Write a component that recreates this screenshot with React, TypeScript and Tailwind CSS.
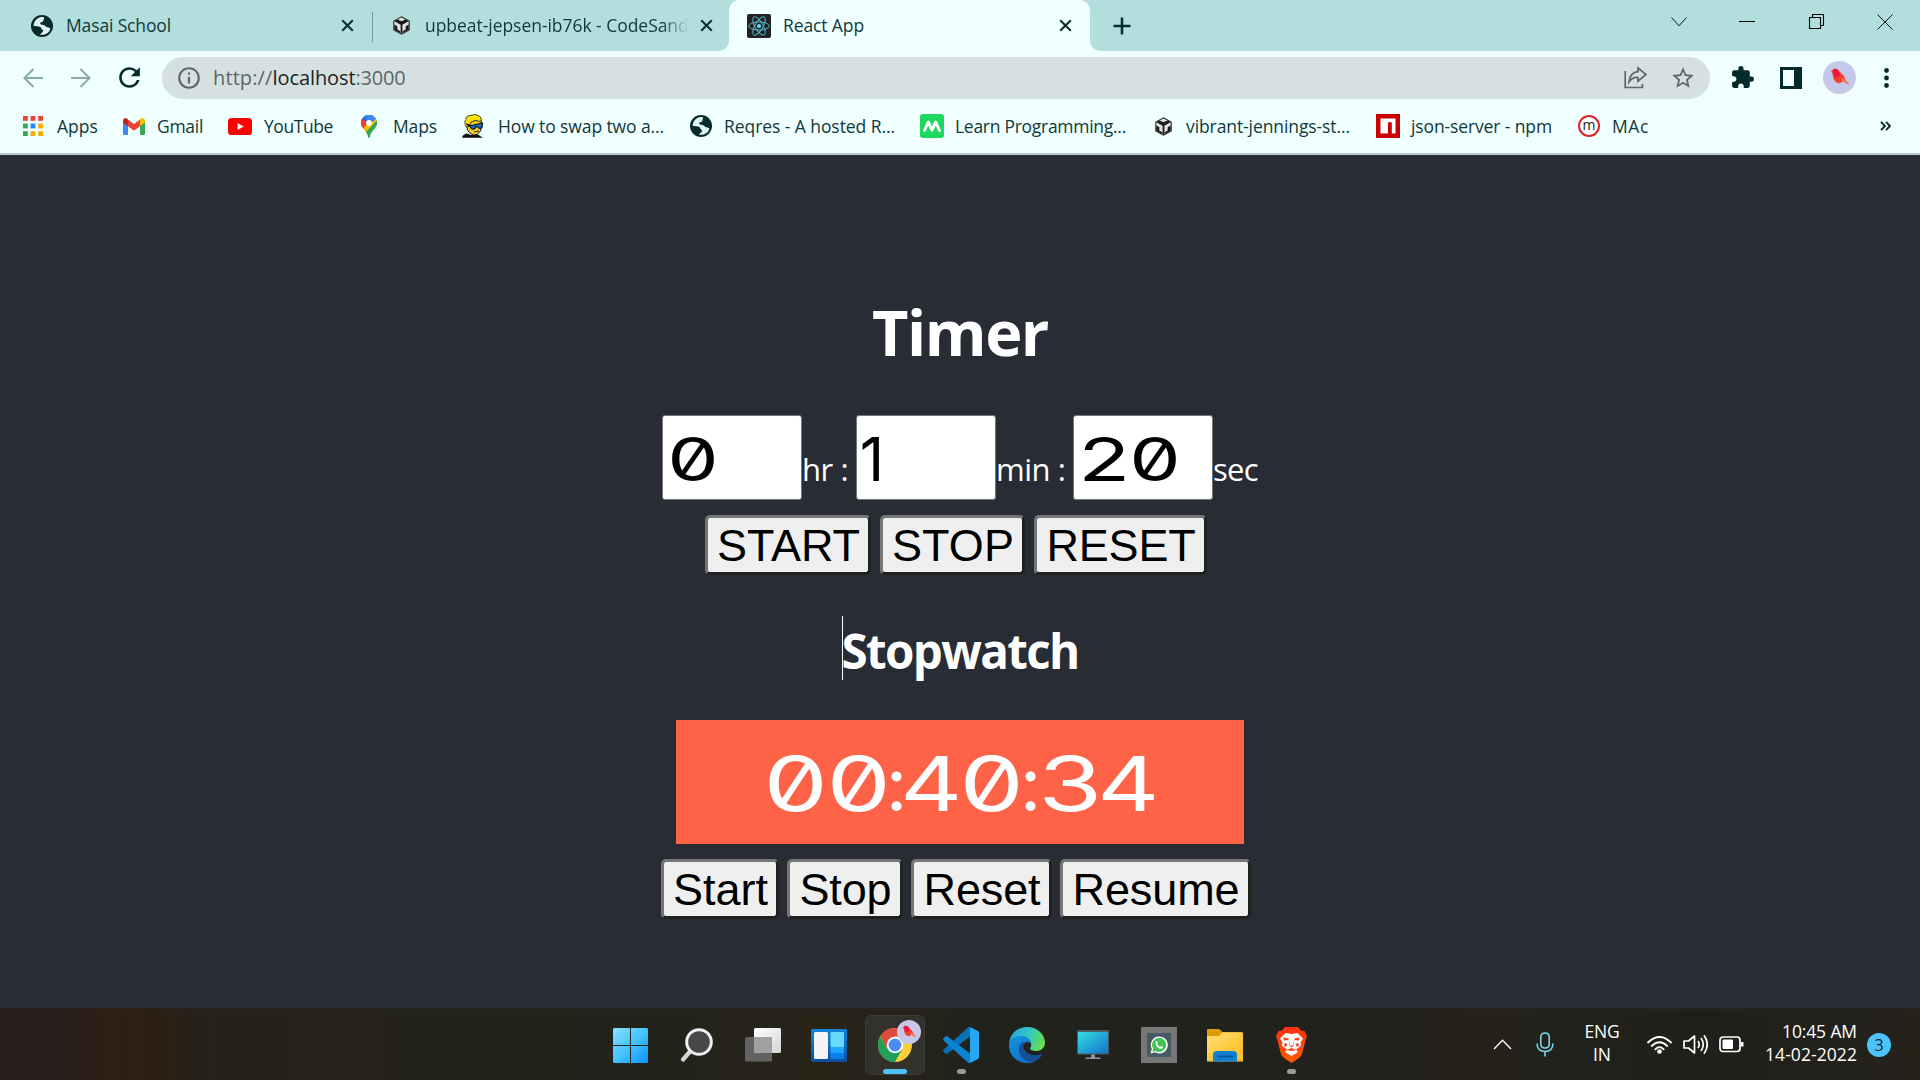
import React, { useLayoutEffect, useRef, useState } from "react";
import { MdExtension, MdInfoOutline, MdRefresh, MdStarBorder } from "react-icons/md";

const UI = "font-['Open_Sans','Noto_Sans',sans-serif]";

/* Text whose tracking is adjusted so that it fills exactly `w` pixels. */
function Fit({ text, w, className = "" }: { text: string; w: number; className?: string }) {
  const ref = useRef<HTMLSpanElement>(null);
  const [ls, setLs] = useState(0);
  useLayoutEffect(() => {
    const run = () => {
      const el = ref.current;
      if (!el) return;
      el.style.letterSpacing = "0px";
      const natural = el.getBoundingClientRect().width;
      const next = (w - natural) / text.length;
      el.style.letterSpacing = next + "px";
      setLs(next);
    };
    run();
    document.fonts.ready.then(run);
  }, [text, w]);
  return (
    <span ref={ref} className={`inline-block shrink-0 whitespace-pre ${className}`} style={{ letterSpacing: ls }}>
      {text}
    </span>
  );
}

/* ---------- icons ---------- */
const Globe = () => (
  <svg width="22" height="22" viewBox="0 0 22 22" className="block">
    <circle cx="11" cy="11" r="11" fill="#052a2c" />
    <path d="M13 2.2 C8 1.5 4.5 4.5 3 8 L2.6 11 C5 11.6 7.5 10.8 9.3 12 C11 13.2 10 14.6 12 15.2 C12.6 17.4 10 17.6 9 19.6 C14 20.6 18.6 17.6 19.4 13.4 C18 12 15.6 12.8 14.4 11 C13.4 9.4 9.6 10.6 9.2 8.6 C9 7 12.4 7.4 12.4 5.6 C12.4 4.4 13.4 3.6 13 2.2Z" fill="#dff3f2" />
  </svg>
);
const Cube = () => (
  <svg width="17" height="19" viewBox="0 0 17 19" className="block">
    <path d="M8.5 .8 L16.2 5 V14 L8.5 18.2 L.8 14 V5Z" fill="#dfe1e1" stroke="#2a2a2a" strokeWidth="1.1" />
    <path d="M4.6 3.4 L8.5 5.200 L12.400 3.400 L15.600 5.200 L8.500 9.200 L1.400 5.200Z" fill="#1a1a1a" />
    <path d="M8.500 8.600 V17.600" stroke="#1a1a1a" strokeWidth="1.800" />
    <path d="M1.300 8.600 L4.300 10.200 V13.400 L7.300 15.200 V17 L1.300 13.800Z M15.700 8.600 L12.700 10.200 V13.400 L9.700 15.200 V17 L15.700 13.800Z" fill="#1a1a1a" />
  </svg>
);
const ReactMark = () => (
  <svg width="24" height="24" viewBox="0 0 24 24" className="block">
    <rect width="24" height="24" rx="2" fill="#222" />
    <g fill="none" stroke="#53b7d3" strokeWidth="1">
      <ellipse cx="12" cy="12" rx="10.3" ry="4" />
      <ellipse cx="12" cy="12" rx="10.3" ry="4" transform="rotate(60 12 12)" />
      <ellipse cx="12" cy="12" rx="10.3" ry="4" transform="rotate(120 12 12)" />
    </g>
    <circle cx="12" cy="12" r="2.1" fill="#61dafb" />
  </svg>
);
const Cross = () => (
  <svg width="13" height="13" viewBox="0 0 13 13" className="block">
    <path d="M1.2 1.2 L11.8 11.8 M11.8 1.2 L1.2 11.8" stroke="#0a2e2e" strokeWidth="2.1" />
  </svg>
);
const AppsGrid = () => (
  <svg width="20" height="20" viewBox="0 0 20 20" className="block">
    {["#ea4335", "#ea4335", "#ea4335", "#34a853", "#1a8cff", "#f9ab00", "#34a853", "#f9ab00", "#f9ab00"].map((c, i) => (
      <rect key={i} x={(i % 3) * 7.6} y={Math.floor(i / 3) * 7.6} width="4.8" height="4.8" fill={c} />
    ))}
  </svg>
);
const Gmail = () => (
  <svg width="22" height="17" viewBox="0 0 22 17" className="block">
    <path d="M0 3 V15.4 Q0 17 1.5 17 H5 V7Z" fill="#4285f4" />
    <path d="M22 3 V15.4 Q22 17 20.500 17 H17 V7Z" fill="#34a853" />
    <path d="M17 1.500 L18.200 .6 Q19.500 -.3 20.800 .4 Q22 1.100 22 3 V4.500 L17 8.300Z" fill="#fbbc04" />
    <path d="M0 3 Q0 1.100 1.200 .4 Q2.500 -.3 3.800 .6 L5 1.500 V8.300 L0 4.500Z" fill="#c5221f" />
    <path d="M5 8.300 V1.500 L11 6.100 L17 1.500 V8.300 L11 12.800Z" fill="#ea4335" />
  </svg>
);
const YouTube = () => (
  <svg width="24" height="17" viewBox="0 0 24 17" className="block">
    <rect width="24" height="17" rx="3.600" fill="#f00" />
    <path d="M9.600 4.900 L15.800 8.500 L9.600 12.100Z" fill="#fff" />
  </svg>
);
const MapPin = () => (
  <svg width="16" height="23" viewBox="0 0 16 23" className="block">
    <clipPath id="pin"><path d="M8 0 C3.500 0 0 3.500 0 8 C0 13.500 6.300 15 7.200 22 Q8 23.600 8.800 22 C9.700 15 16 13.500 16 8 C16 3.500 12.500 0 8 0Z" /></clipPath>
    <g clipPath="url(#pin)">
      <rect width="16" height="23" fill="#34a853" />
      <path d="M0 13 L16 -4 H0Z" fill="#1a73e8" />
      <path d="M0 3 L8 8 L-2 17Z" fill="#ea4335" />
      <path d="M1.500 14 L16 -1 V9 L5 18Z" fill="#fbbc04" />
      <path d="M5 17 L16 5 V23 H5Z" fill="#34a853" />
      <path d="M5 0 H16 V3 L10 8 L6 6Z" fill="#4285f4" />
    </g>
    <circle cx="8" cy="8" r="2.900" fill="#fff" />
  </svg>
);
const Geek = () => (
  <svg width="22" height="24" viewBox="0 0 22 24" className="block">
    <path d="M0 23.800 Q1 20 5 19.500 L9 21 L15 20 L21 23.800Z" fill="#111" />
    <path d="M5 7 L19 6 Q20.500 12 18.500 17 Q16 21.500 11.500 21 Q6 19 5 14Z" fill="#f6c921" stroke="#222" strokeWidth="1" />
    <path d="M4.500 13 Q1.500 8 4 5.500 Q3.500 2 8 1.500 Q14 -1 18 2.500 Q20.500 5 18.500 7.500 Q13 5.500 9 8 L7.500 12Z" fill="#fde300" stroke="#333" strokeWidth=".9" />
    <path d="M4.500 10 L9.500 11.500 L20.500 9 L20 13.500 Q17.500 15.500 15.500 13 L14 12.500 Q12.500 16.500 9.500 14.500 L8 12.500Z" fill="#0b72c9" stroke="#111" strokeWidth="1.200" />
    <path d="M12 18 L17 17" stroke="#222" strokeWidth="1" />
  </svg>
);
const MasaiM = () => (
  <svg width="24" height="24" viewBox="0 0 24 24" className="block">
    <rect width="24" height="24" rx="3" fill="#1ed760" />
    <path d="M4.500 16.500 L8.300 8 L12 16 L15.700 8 L19.500 16.500" fill="none" stroke="#fff" strokeWidth="3" strokeLinejoin="round" strokeLinecap="round" />
  </svg>
);
const Npm = () => (
  <svg width="24" height="24" viewBox="0 0 24 24" className="block">
    <rect width="24" height="24" fill="#cb0000" />
    <path d="M4.500 4.500 H19.500 V19.500 H15.800 V8.200 H12 V19.500 H4.500Z" fill="#fff" />
  </svg>
);
const MacIcon = () => (
  <span className="flex h-[22px] w-[22px] items-center justify-center rounded-full border-2 border-[#d8262c] bg-white pb-[3px] font-['Open_Sans'] text-[14px] leading-none text-[#222]">m</span>
);
const Bird = ({ s }: { s: number }) => (
  <svg width={s} height={s} viewBox="0 0 33 33" className="block">
    <circle cx="16.500" cy="16.500" r="16.500" fill="#c5c8e8" />
    <path d="M8 10.500 L10.500 8 Q14 7 16 10 L21 15 L22.500 19 L26 23.500 L23 22 L19.500 20.500 L16 22.500 Q11 21 10 16 Q10 12 8 10.500Z" fill="#f5402f" />
    <path d="M10.500 8 Q14 7 16 10 L17 15 L12 17 Q10 14 10 11Z" fill="#e9173e" />
    <path d="M19 17 L22.500 19 L26 23.500 L23 22 L19 20.500Z" fill="#ff7a50" />
    <path d="M16.500 22 V24.500" stroke="#f7b9b0" strokeWidth="1" />
  </svg>
);

/* ---------- browser ---------- */
function TabStrip() {
  return (
    <div className="flex h-[51px] shrink-0 bg-[#b2dfdd] text-[17.500px] text-[#12383a]">
      <div className="flex w-[372px] items-center pl-[31px]">
        <Globe />
        <Fit text="Masai School" w={105} className="ml-[13px]" />
        <span className="ml-auto mr-[18px]"><Cross /></span>
      </div>
      <div className="mt-3 h-[30px] w-px shrink-0 bg-[#6f9c9c]" />
      <div className="flex w-[356px] items-center pl-[20px]">
        <Cube />
        <div className="ml-[15px] w-[263px] overflow-hidden [mask-image:linear-gradient(to_right,black_90%,transparent_100%)]">
          <Fit text="upbeat-jepsen-ib76k - CodeSandbox" w={294} />
        </div>
        <span className="ml-[12px]"><Cross /></span>
      </div>
      <div className="relative flex w-[361px] items-center rounded-t-[10px] bg-[#f0ffff] pl-[18px]">
        <span className="absolute -left-2.5 bottom-0 h-2.5 w-2.5 bg-[radial-gradient(circle_at_0_0,#b2dfdd_9.500px,#f0ffff_10px)]" />
        <span className="absolute -right-2.5 bottom-0 h-2.5 w-2.5 bg-[radial-gradient(circle_at_100%_0,#b2dfdd_9.500px,#f0ffff_10px)]" />
        <ReactMark />
        <Fit text="React App" w={81} className="ml-[12px]" />
        <span className="ml-auto mr-[18px]"><Cross /></span>
      </div>
      <div className="flex items-center pl-[23px]">
        <svg width="18" height="18" viewBox="0 0 18 18"><path d="M9 0.500V17.500M0.500 9H17.500" stroke="#0a2e2e" strokeWidth="2.600" /></svg>
      </div>
      <div className="ml-auto mt-[13px] flex h-[17px] items-center pr-[27px]">
        <svg width="16" height="10" viewBox="0 0 16 10" className="mr-[52px]"><path d="M.5 .5 L8 8.800 L15.500 .5" fill="none" stroke="#111" strokeWidth="1" /></svg>
        <span className="mr-[53px] h-px w-[16px] bg-black" />
        <svg width="17" height="17" viewBox="0 0 17 17" className="mr-[52px]"><path d="M1.500 4.500H12.500V15.500H1.500Z M4.500 4.500V1.500H15.500V12.500H12.500" fill="none" stroke="#000" strokeWidth="1.100" /></svg>
        <svg width="16" height="16" viewBox="0 0 16 16"><path d="M.5 .5L15.500 15.500M15.500 .5L.5 15.500" stroke="#111" strokeWidth="1" /></svg>
      </div>
    </div>
  );
}

function Toolbar() {
  return (
    <div className="flex h-[53px] shrink-0 items-center pl-[23px]">
      <svg width="20" height="20" viewBox="0 0 20 20"><path d="M20 10H2M10.500 1L1.500 10L10.500 19" fill="none" stroke="#8aa9a9" strokeWidth="2" /></svg>
      <svg width="20" height="20" viewBox="0 0 20 20" className="ml-[28px]"><path d="M0 10H18M9.500 1L18.500 10L9.500 19" fill="none" stroke="#8aa9a9" strokeWidth="2" /></svg>
      <MdRefresh className="ml-[23px] h-[31px] w-[31px] text-[#052a2c]" />
      <div className="ml-[17px] flex h-[42px] w-[1548px] items-center rounded-full bg-[#d5e0e0] pl-[14px] text-[20px] text-[#5f6668]">
        <MdInfoOutline className="h-[26px] w-[26px]" />
        <Fit text="http://" w={59.5} className="ml-[11px] pt-px" />
        <Fit text="localhost" w={83} className="pt-px text-[#1c2325]" />
        <Fit text=":3000" w={50} className="pt-px" />
        <svg width="23" height="23" viewBox="0 0 23 23" className="ml-auto mr-[23px]">
          <path d="M1.200 5V21.500H18.500V18" fill="none" stroke="#5f6668" strokeWidth="1.700" />
          <path d="M14 1.800L22 8.500L14 15.200V11.500Q8.500 11 5 16Q6 6.500 14 5.700Z" fill="none" stroke="#5f6668" strokeWidth="1.700" />
        </svg>
        <MdStarBorder className="mr-[14px] h-[26px] w-[26px]" />
      </div>
      <MdExtension className="ml-[20px] h-[25px] w-[25px] text-[#052a2c]" />
      <svg width="22" height="22" viewBox="0 0 22 22" className="ml-[25px]"><path d="M0 0H22V22H0Z M3 3V19H14V3Z" fill="#052a2c" fillRule="evenodd" /></svg>
      <span className="ml-[21px]"><Bird s={33} /></span>
      <svg width="5" height="20" viewBox="0 0 5 20" className="ml-[28px]">
        <circle cx="2.500" cy="2.500" r="2.400" fill="#052a2c" /><circle cx="2.500" cy="10" r="2.400" fill="#052a2c" /><circle cx="2.500" cy="17.500" r="2.400" fill="#052a2c" />
      </svg>
    </div>
  );
}

function Mark({ icon, iconBox, text, w, gap }: { icon: React.ReactNode; iconBox: string; text: string; w: number; gap: string }) {
  return (
    <div className={`flex shrink-0 items-center ${gap}`}>
      <span className={`flex shrink-0 ${iconBox}`}>{icon}</span>
      <Fit text={text} w={w} />
    </div>
  );
}

function Bookmarks() {
  return (
    <div className="flex h-[49px] shrink-0 items-center pb-[5px] text-[17.500px] text-[#12383a]">
      <Mark gap="ml-[23px]" iconBox="w-[34px]" icon={<AppsGrid />} text="Apps" w={41} />
      <Mark gap="ml-[25px]" iconBox="w-[34px]" icon={<Gmail />} text="Gmail" w={46} />
      <Mark gap="ml-[25px]" iconBox="w-[36px]" icon={<YouTube />} text="YouTube" w={69} />
      <Mark gap="ml-[28px]" iconBox="w-[32px]" icon={<MapPin />} text="Maps" w={44} />
      <Mark gap="ml-[25px]" iconBox="w-[36px]" icon={<Geek />} text="How to swap two a..." w={166} />
      <Mark gap="ml-[26px]" iconBox="w-[34px]" icon={<Globe />} text="Reqres - A hosted R..." w={171} />
      <Mark gap="ml-[25px]" iconBox="w-[35px]" icon={<MasaiM />} text="Learn Programming..." w={171} />
      <Mark gap="ml-[29px]" iconBox="w-[31px]" icon={<Cube />} text="vibrant-jennings-st..." w={164} />
      <Mark gap="ml-[26px]" iconBox="w-[35px]" icon={<Npm />} text="json-server - npm" w={141} />
      <Mark gap="ml-[26px]" iconBox="w-[34px]" icon={<MacIcon />} text="MAc" w={37} />
      <svg width="11" height="10" viewBox="0 0 11 10" className="ml-auto mr-[29px]"><path d="M1 .8L5 5L1 9.200M6 .8L10 5L6 9.200" fill="none" stroke="#052a2c" strokeWidth="1.900" /></svg>
    </div>
  );
}

/* ---------- page ---------- */
/* One wide digit: a fixed cell holding a horizontally stretched character. */
function Digit({ c, cell, stretch }: { c: string; cell: string; stretch: string }) {
  return (
    <span className={`flex justify-center ${cell}`}>
      <span className={`inline-block ${stretch}`}>{c}</span>
    </span>
  );
}

const wide = "font-['Inter',sans-serif] [font-weight:370] [font-feature-settings:'zero'_1]";
const field = "flex h-[85px] w-[140px] items-center rounded-[3px] border border-[#767676] bg-white pt-[3px] text-[60px] leading-none text-black";

function Btn({ text, w, tw }: { text: string; w: string; tw: number }) {
  return (
    <button className={`flex h-[60px] items-center justify-center rounded-[5px] border-[3px] border-t-[#767676] border-l-[#767676] border-r-[#212121] border-b-[#212121] bg-[#efefef] pt-px pl-px font-['Liberation_Sans',sans-serif] text-[45px] leading-[50px] text-black ${w}`}>
      <Fit text={text} w={tw} />
    </button>
  );
}

function Page() {
  return (
    <div className="flex h-[853px] shrink-0 flex-col bg-[#282c34] text-white">
      <div className="mt-[133px] flex h-[88px] items-center justify-center text-[63px] font-bold leading-[88px]">
        <Fit text="Timer" w={176} />
      </div>
      <div className="ml-[662px] mt-[39px] flex h-[85px] text-[31px]">
        <div className={`${field} ${wide} pl-[3px]`}>
          <Digit c="0" cell="w-[54px]" stretch="scale-x-[1.36]" />
        </div>
        <Fit text="hr : " w={54} className="mt-[32px] leading-[44px]" />
        <div className={`${field} ${wide} pl-[2px]`}>
          <Digit c="1" cell="w-[26px]" stretch="scale-x-100" />
        </div>
        <Fit text="min : " w={77} className="mt-[32px] leading-[44px]" />
        <div className={`${field} ${wide} pl-[5px]`}>
          <Digit c="2" cell="w-[50px]" stretch="scale-x-[1.42]" />
          <Digit c="0" cell="w-[52px]" stretch="scale-x-[1.36]" />
        </div>
        <Fit text="sec" w={45} className="mt-[32px] leading-[44px]" />
      </div>
      <div className="ml-[705px] mt-[15px] flex gap-[9px]">
        <Btn text="START" w="w-[166px]" tw={143} />
        <Btn text="STOP" w="w-[145px]" tw={122} />
        <Btn text="RESET" w="w-[173px]" tw={149} />
      </div>
      <div className="mt-[41px] flex h-[64px] items-center justify-center text-[47.500px] font-bold leading-[64px]">
        <span className="-mr-px h-[64px] w-px bg-white" />
        <Fit text="Stopwatch" w={237} className="pt-[5px]" />
      </div>
      <div className={`ml-[676px] mt-[40px] flex h-[124px] w-[568px] items-center bg-[#ff6347] pl-[88px] pt-[3px] text-[75px] leading-none ${wide}`}>
        <Digit c="0" cell="w-[63px]" stretch="scale-x-[1.36]" />
        <Digit c="0" cell="w-[63px]" stretch="scale-x-[1.36]" />
        <Digit c=":" cell="w-[13px]" stretch="scale-x-100" />
        <Digit c="4" cell="w-[57px]" stretch="scale-x-[1.28]" />
        <Digit c="0" cell="w-[64px]" stretch="scale-x-[1.36]" />
        <Digit c=":" cell="w-[13px]" stretch="scale-x-100" />
        <Digit c="3" cell="w-[66px]" stretch="scale-x-[1.38]" />
        <Digit c="4" cell="w-[50px]" stretch="scale-x-[1.28]" />
      </div>
      <div className="ml-[661px] mt-[15px] flex gap-[8px]">
        <Btn text="Start" w="w-[118px]" tw={95} />
        <Btn text="Stop" w="w-[116px]" tw={92} />
        <Btn text="Reset" w="w-[141px]" tw={117} />
        <Btn text="Resume" w="w-[191px]" tw={167} />
      </div>
    </div>
  );
}

/* ---------- taskbar ---------- */
const WinLogo = () => (
  <svg width="35" height="35" viewBox="0 0 35 35">
    <defs><linearGradient id="win" x1="0" y1="0" x2="1" y2="1"><stop offset="0" stopColor="#8be0ff" /><stop offset=".5" stopColor="#45c4ff" /><stop offset="1" stopColor="#0a93fb" /></linearGradient></defs>
    <path d="M1 0H17V17H0V1Z M18 0H34L35 1V17H18Z M0 18H17V35H1L0 34Z M18 18H35V34L34 35H18Z" fill="url(#win)" />
  </svg>
);
const SearchIcon = () => (
  <svg width="34" height="36" viewBox="0 0 34 36">
    <path d="M10.500 24L3 32.500" stroke="#d4d4d4" strokeWidth="4.200" strokeLinecap="round" />
    <circle cx="19" cy="15" r="12.300" fill="#484846" stroke="#f0f0f0" strokeWidth="3" />
  </svg>
);
const TaskView = () => (
  <svg width="36" height="34" viewBox="0 0 36 34">
    <defs><linearGradient id="tv" x1="0" y1="0" x2="1" y2="1"><stop offset="0" stopColor="#fff" /><stop offset="1" stopColor="#d5d5d5" /></linearGradient></defs>
    <rect y="9" width="27" height="24.500" rx="1.500" fill="#626262" />
    <rect x="9" width="27" height="25" rx="1.500" fill="url(#tv)" />
    <path d="M9 9H27V25H10.500Q9 25 9 23.500Z" fill="#a0a0a0" />
  </svg>
);
const Widgets = () => (
  <svg width="36" height="33" viewBox="0 0 36 33">
    <defs><linearGradient id="wd" x1="0" y1="0" x2="0" y2="1"><stop offset="0" stopColor="#0f86dc" /><stop offset="1" stopColor="#0d4fa0" /></linearGradient></defs>
    <rect width="36" height="33" rx="1.500" fill="url(#wd)" />
    <rect x="3" y="3" width="14" height="27" rx="1.500" fill="#f4f4f4" />
    <rect x="19.500" y="3" width="13.500" height="15" rx="1" fill="#69dafe" />
    <rect x="19.500" y="18" width="13.500" height="6" fill="#1fa6fb" />
    <rect x="19.500" y="24" width="13.500" height="6" rx="1" fill="#0a80ea" />
  </svg>
);
const Chrome = () => (
  <svg width="34" height="34" viewBox="0 0 34 34">
    <circle cx="17" cy="17" r="17" fill="#fdd03b" />
    <path d="M2.280 8.500L9.640 21.250L17 17V8.500H31.720A17 17 0 0 0 2.280 8.500Z" fill="#dd4b3e" />
    <path d="M2.280 8.500A17 17 0 0 0 17 34L24.360 21.250L17 17L9.640 21.250Z" fill="#22a05a" />
    <circle cx="17" cy="17" r="8.300" fill="#fff" />
    <circle cx="17" cy="17" r="6.400" fill="#4c8bf5" />
  </svg>
);
const VsCode = () => (
  <svg width="36" height="36" viewBox="0 0 100 100">
    <path d="M96 10.500L75.500 .7a6 6 0 0 0-7 1.200L1.800 62.500a4 4 0 0 0 0 6l5.500 5a4 4 0 0 0 5.300.2L93.500 12.500A4 4 0 0 1 100 15.700V16a6 6 0 0 0-4-5.500Z" fill="#0871b8" />
    <path d="M96 89.500L75.500 99.300a6 6 0 0 1-7-1.200L1.800 37.500a4 4 0 0 1 0-6l5.500-5a4 4 0 0 1 5.300-.2L93.500 87.500A4 4 0 0 0 100 84.300V84a6 6 0 0 1-4 5.500Z" fill="#0a86d1" />
    <path d="M75.500 99.300a6 6 0 0 1-7-1.200A3.500 3.500 0 0 0 75 95.600V4.400A3.500 3.500 0 0 0 68.500 1.900a6 6 0 0 1 7-1.200L96.500 10.800A6 6 0 0 1 100 16.200V83.800a6 6 0 0 1-3.500 5.400Z" fill="#2aa7f3" />
  </svg>
);
const Edge = () => (
  <svg width="36" height="36" viewBox="0 0 36 36">
    <defs>
      <linearGradient id="e1" x1="0" y1=".2" x2="1" y2=".5"><stop offset="0" stopColor="#2aa7e0" /><stop offset=".5" stopColor="#30c5c9" /><stop offset="1" stopColor="#66e04f" /></linearGradient>
      <linearGradient id="e2" x1="0" y1="0" x2=".6" y2="1"><stop offset="0" stopColor="#1292dc" /><stop offset="1" stopColor="#0f73cf" /></linearGradient>
    </defs>
    <path d="M0 16C1.500 6 9 0 18 0C29 0 36 8 36 15.500C36 21 32 24 27.500 24C22.500 24 20.500 22.300 21.200 21C24 17 21 10 13 10C6 10 1.500 13 0 16Z" fill="url(#e1)" />
    <path d="M0 17C1.500 11 7 9 12 9C18 9 22 12.500 22 17C20 13.500 14 14.500 14 21C14 28 20 34 27 33.500C23 36 20 36 18 36C7 36 -1 27 0 17Z" fill="url(#e2)" />
    <path d="M16.500 14.500C10 15 8.500 22 11 27.500C14 33.500 20 36 25 34.500C29 33 32 30 33 27.500C33.500 26.500 33 26.500 32 27C25 30 16 27 14.500 20.500C14 18 15 15.500 16.500 14.500Z" fill="#164f98" />
  </svg>
);
const Monitor = () => (
  <svg width="32" height="30" viewBox="0 0 32 30">
    <defs><linearGradient id="mn" x1="0" y1="0" x2="1" y2="1"><stop offset="0" stopColor="#35dce4" /><stop offset="1" stopColor="#1173c8" /></linearGradient></defs>
    <rect width="32" height="24.500" rx="1" fill="#4a5a63" />
    <rect x="1" y="2" width="30" height="21.500" fill="url(#mn)" />
    <path d="M14 24.500H18V27.500H23.500V29H8.500V27.500H14Z" fill="#8e979d" />
  </svg>
);
const WhatsApp = () => (
  <span className="flex h-9 w-9 items-center justify-center bg-[#777]">
    <span className="flex h-6 w-6 items-center justify-center bg-[#455a64]">
      <svg width="18" height="18" viewBox="0 0 18 18">
        <path d="M.5 17.500L1.800 13A8.500 8.500 0 1 1 5 16.300Z" fill="#fff" />
        <path d="M2.200 15.800L3.200 12.600A7 7 0 1 1 5.600 14.900Z" fill="#3fc351" />
        <path d="M5.500 5.500Q6.500 4.300 7.200 5.500L7.900 7.200L7.200 8.200Q8.300 10.200 10.200 10.800L11.200 9.900L13 10.800Q13 13 10.800 13Q5 11.500 5.500 5.500Z" fill="#fff" />
      </svg>
    </span>
  </span>
);
const Folder = () => (
  <svg width="36" height="33" viewBox="0 0 36 33">
    <defs><linearGradient id="fd" x1="0" y1="0" x2="1" y2="1"><stop offset="0" stopColor="#ffdd78" /><stop offset="1" stopColor="#fbbc16" /></linearGradient></defs>
    <path d="M0 1Q0 0 1 0H11Q12.500 0 13.500 1L15.500 3.200H34V9H0Z" fill="#dd9a05" />
    <path d="M0 7H12L15.500 3.200H35Q36 3.200 36 4.200V32.500H0Z" fill="url(#fd)" />
    <path d="M6 32.500V26Q6 22 10 22H26Q30 22 30 26V32.500Z" fill="#1080d3" />
    <path d="M11 27.500H25" stroke="#0b569f" strokeWidth="2" strokeLinecap="round" />
  </svg>
);
const Brave = () => (
  <svg width="31" height="36" viewBox="0 0 31 36">
    <defs><linearGradient id="br" x1="0" y1="0" x2="0" y2="1"><stop offset="0" stopColor="#ff2f12" /><stop offset="1" stopColor="#ff5a00" /></linearGradient></defs>
    <path d="M9 0H22L25 3.500L28.500 4L31 9L29.700 13L26 27Q25 29.500 23 31L15.500 36L8 31Q6 29.500 5 27L1.300 13L0 9L2.500 4L6 3.500Z" fill="url(#br)" />
    <path d="M9.500 6L15.500 7L21.500 6L27 11.500L24.500 15.500L25.300 18.500L20 22.500L22 25L15.500 29L9 25L11 22.500L5.700 18.500L6.500 15.500L4 11.500Z" fill="#fff" />
    <path d="M7.500 10.500L12.500 11.500V13L8 13.500Z M23.500 10.500L18.500 11.500V13L23 13.500Z M12.500 12L13.500 18.500L15.500 20.500L17.500 18.500L18.500 12L17 18L15.500 19L14 18Z M10.500 23L15.500 21L20.500 23L15.500 24Z M9 16L11.500 17L10 20L8 18.500Z M22 16L19.500 17L21 20L23 18.500Z" fill="#ff3d10" />
  </svg>
);

const Slot = ({ w, children, run = false }: { w: string; children: React.ReactNode; run?: boolean }) => (
  <div className={`relative flex h-full shrink-0 items-center justify-center ${w}`}>
    {children}
    {run && <span className="absolute bottom-[6px] h-[5px] w-[9px] rounded-full bg-[#9a9a98]" />}
  </div>
);

function Taskbar() {
  return (
    <div className="flex h-[72px] shrink-0 border-t border-[#26261f] bg-[#23221c] bg-[linear-gradient(to_right,#281e1e_0px,#291e1a_60px,#2f1f15_110px,#2b2016_160px,#26221a_220px,#24231b_420px,#22231c_620px,#282418_820px,#22221d_980px,#21211d_1400px,#26221a_1460px,#22221c_1560px,#201f1b_1700px,#24221b_1900px)] text-white">
      <div className="ml-[597px] flex">
        <Slot w="w-[66px]"><span className="mt-0.5"><WinLogo /></span></Slot>
        <Slot w="w-[67px]"><SearchIcon /></Slot>
        <Slot w="w-[65px]"><span className="mt-px"><TaskView /></span></Slot>
        <Slot w="w-[67px]"><span className="mt-px"><Widgets /></span></Slot>
        <Slot w="w-[66px]">
          <div className="relative flex h-[60px] w-[60px] items-center justify-center rounded-[6px] border border-[#3c3b36] bg-[#33312b]">
            <Chrome />
            <span className="absolute right-[3px] top-[4px]"><Bird s={24} /></span>
            <span className="absolute bottom-0 h-[5px] w-6 rounded-full bg-[#4cc2ff]" />
          </div>
        </Slot>
        <Slot w="w-[66px]" run><VsCode /></Slot>
        <Slot w="w-[66px]"><Edge /></Slot>
        <Slot w="w-[66px]"><Monitor /></Slot>
        <Slot w="w-[66px]"><WhatsApp /></Slot>
        <Slot w="w-[66px]"><span className="mt-px"><Folder /></span></Slot>
        <Slot w="w-[66px]" run><Brave /></Slot>
      </div>
      <div className="ml-auto flex items-center pr-[29px]">
        <svg width="19" height="11" viewBox="0 0 19 11" className="mr-[24px]"><path d="M1 10L9.500 1.300L18 10" fill="none" stroke="#fff" strokeWidth="1.300" /></svg>
        <svg width="18" height="25" viewBox="0 0 18 25" className="mr-[30px]">
          <path d="M9 1Q13.200 1 13.200 5V12Q13.200 16 9 16Q4.800 16 4.800 12V5Q4.800 1 9 1Z M1 11.500Q1.300 19.500 9 19.500Q16.700 19.500 17 11.500M9 19.500V24.500" fill="none" stroke="#7ad7ee" strokeWidth="1.600" />
        </svg>
        <div className="mb-[3px] mr-[27px] flex w-[36px] flex-col items-center text-[17.500px] leading-[23px]">
          <Fit text="ENG" w={35} /><Fit text="IN" w={18} />
        </div>
        <svg width="25" height="18" viewBox="0 0 25 18" className="mr-[11px]">
          <path d="M1 6.500Q12.500 -4.500 24 6.500M4.700 10Q12.500 2.500 20.300 10M8.300 13.300Q12.500 9 16.700 13.300" fill="none" stroke="#fff" strokeWidth="1.800" strokeLinecap="round" />
          <circle cx="12.500" cy="15.500" r="2.300" fill="#fff" />
        </svg>
        <svg width="25" height="21" viewBox="0 0 25 21" className="mr-[11px]">
          <path d="M1 7H5.500L11.500 2V19L5.500 14H1Z M15 7Q17.500 10.500 15 14M18 4Q22.500 10.500 18 17M21 1.300Q27.500 10.500 21 19.700" fill="none" stroke="#fff" strokeWidth="1.700" strokeLinejoin="round" />
        </svg>
        <svg width="25" height="17" viewBox="0 0 25 17" className="mr-[21px]">
          <rect x="1" y="1" width="20" height="14.500" rx="3" fill="none" stroke="#fff" strokeWidth="1.700" />
          <rect x="3.500" y="3.500" width="10.500" height="9.500" rx="1" fill="#fff" /><path d="M21.500 6H24.500V10.500H21.500Z" fill="#fff" />
        </svg>
        <div className="mb-[3px] flex flex-col items-end text-[17.500px] leading-[23px]">
          <Fit text="10:45 AM" w={75} /><Fit text="14-02-2022" w={92} />
        </div>
        <span className="ml-[10px] flex h-6 w-6 items-center justify-center rounded-full bg-[#4cc2ff] text-[16px] leading-none text-[#10222c]">3</span>
      </div>
    </div>
  );
}

export default function App() {
  return (
    <div className={`flex h-[1080px] w-[1920px] flex-col overflow-hidden bg-[#f0ffff] ${UI}`}>
      <TabStrip />
      <Toolbar />
      <Bookmarks />
      <div className="h-[2px] shrink-0 bg-[#b3cccb]" />
      <Page />
      <Taskbar />
    </div>
  );
}
